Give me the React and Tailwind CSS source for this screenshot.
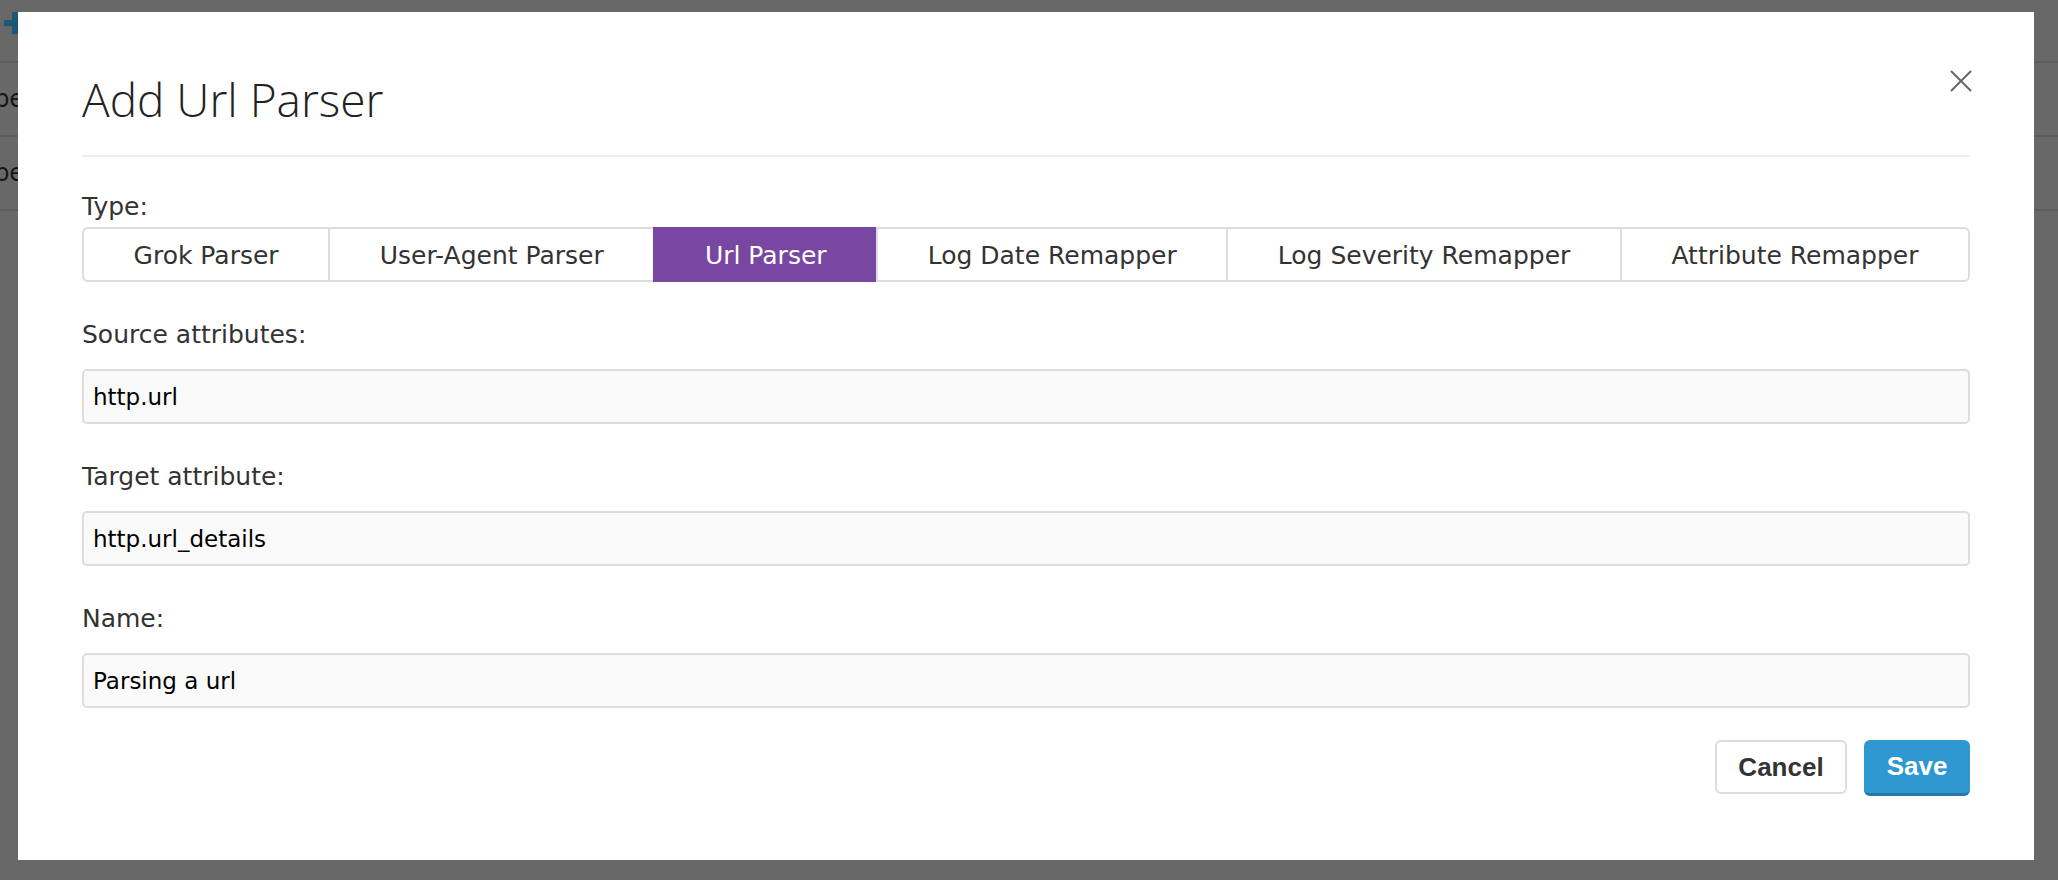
import React from "react";

const tabs = [
  "Grok Parser",
  "User-Agent Parser",
  "Url Parser",
  "Log Date Remapper",
  "Log Severity Remapper",
  "Attribute Remapper",
];

const body = { fontFamily: '"DejaVu Sans", "Open Sans", sans-serif' };

function Field({ label, value }) {
  return (
    <div className="flex flex-col">
      <div className="h-[28px] text-[25px] leading-[28px] text-[#333]" style={body}>
        {label}
      </div>
      <input
        readOnly
        defaultValue={value}
        className="mt-[20px] h-[55px] w-full rounded-[5px] border-2 border-[#dddddd] bg-[#fafafa] px-[9px] text-[23px] text-black outline-none"
        style={body}
      />
    </div>
  );
}

export default function App() {
  return (
    <div className="relative h-[880px] w-[2058px] overflow-hidden bg-[#686868]">
      {/* page behind the overlay */}
      <div className="flex flex-col">
        <div className="relative h-[63px] border-b-2 border-[#5c5c5c]">
          <svg className="absolute left-[4px] top-[12px]" width="22" height="22" viewBox="0 0 22 22">
            <rect x="8" y="0" width="6" height="22" fill="#1c5876" />
            <rect x="0" y="8" width="22" height="6" fill="#1c5876" />
          </svg>
        </div>
        <div className="flex h-[74px] items-center border-b-2 border-[#5c5c5c]">
          <span className="ml-[-31px] text-[24px] text-[#161616]" style={body}>Type</span>
        </div>
        <div className="flex h-[74px] items-center border-b-2 border-[#5c5c5c]">
          <span className="ml-[-31px] text-[24px] text-[#161616]" style={body}>Type</span>
        </div>
      </div>

      {/* modal */}
      <div className="absolute left-[18px] top-[12px] w-[2016px] bg-white px-[64px] pb-[64px] pt-[55px]">
        <button className="absolute right-[62px] top-[58px]" aria-label="close">
          <svg width="22" height="22" viewBox="0 0 22 22">
            <path d="M1 1 L21 21 M21 1 L1 21" stroke="#666" strokeWidth="2" fill="none" />
          </svg>
        </button>
        <h1
          className="h-[64px] text-[46px] font-light leading-[64px] text-[#222]"
          style={{ fontFamily: '"Open Sans", sans-serif' }}
        >
          Add Url Parser
        </h1>
        <div className="mt-[24px] h-[2px] bg-[#eeeeee]" />

        <div className="mt-[36px] h-[28px] text-[25px] leading-[28px] text-[#333]" style={body}>
          Type:
        </div>
        <div className="mt-[6px] flex h-[55px]">
          {tabs.map((t, i) => {
            const active = t === "Url Parser";
            return (
              <div
                key={t}
                className={
                  "flex flex-auto items-center justify-center border-y-2 border-l-2 pt-[3px] text-[25px] " +
                  (active
                    ? "border-[#7847a2] bg-[#7847a2] text-white"
                    : "border-[#dddddd] bg-white text-[#333]") +
                  (i === 0 ? " rounded-l-[6px]" : "") +
                  (i === tabs.length - 1 ? " rounded-r-[6px] border-r-2" : "")
                }
                style={body}
              >
                {t}
              </div>
            );
          })}
        </div>

        <div className="mt-[39px] flex flex-col gap-[39px]">
          <Field label="Source attributes:" value="http.url" />
          <Field label="Target attribute:" value="http.url_details" />
          <Field label="Name:" value="Parsing a url" />
        </div>

        <div className="mt-[32px] flex justify-end gap-[17px]">
          <button
            className="h-[54px] w-[132px] rounded-[6px] border-2 border-[#dddddd] bg-white text-[26px] font-bold text-[#333]"
            style={{ fontFamily: '"Liberation Sans", Arial, sans-serif' }}
          >
            Cancel
          </button>
          <button
            className="h-[56px] w-[106px] rounded-[6px] border-b-[3px] border-[#2778a6] bg-[#2f98d0] text-[26px] font-bold text-white"
            style={{ fontFamily: '"Liberation Sans", Arial, sans-serif' }}
          >
            Save
          </button>
        </div>
      </div>
    </div>
  );
}
